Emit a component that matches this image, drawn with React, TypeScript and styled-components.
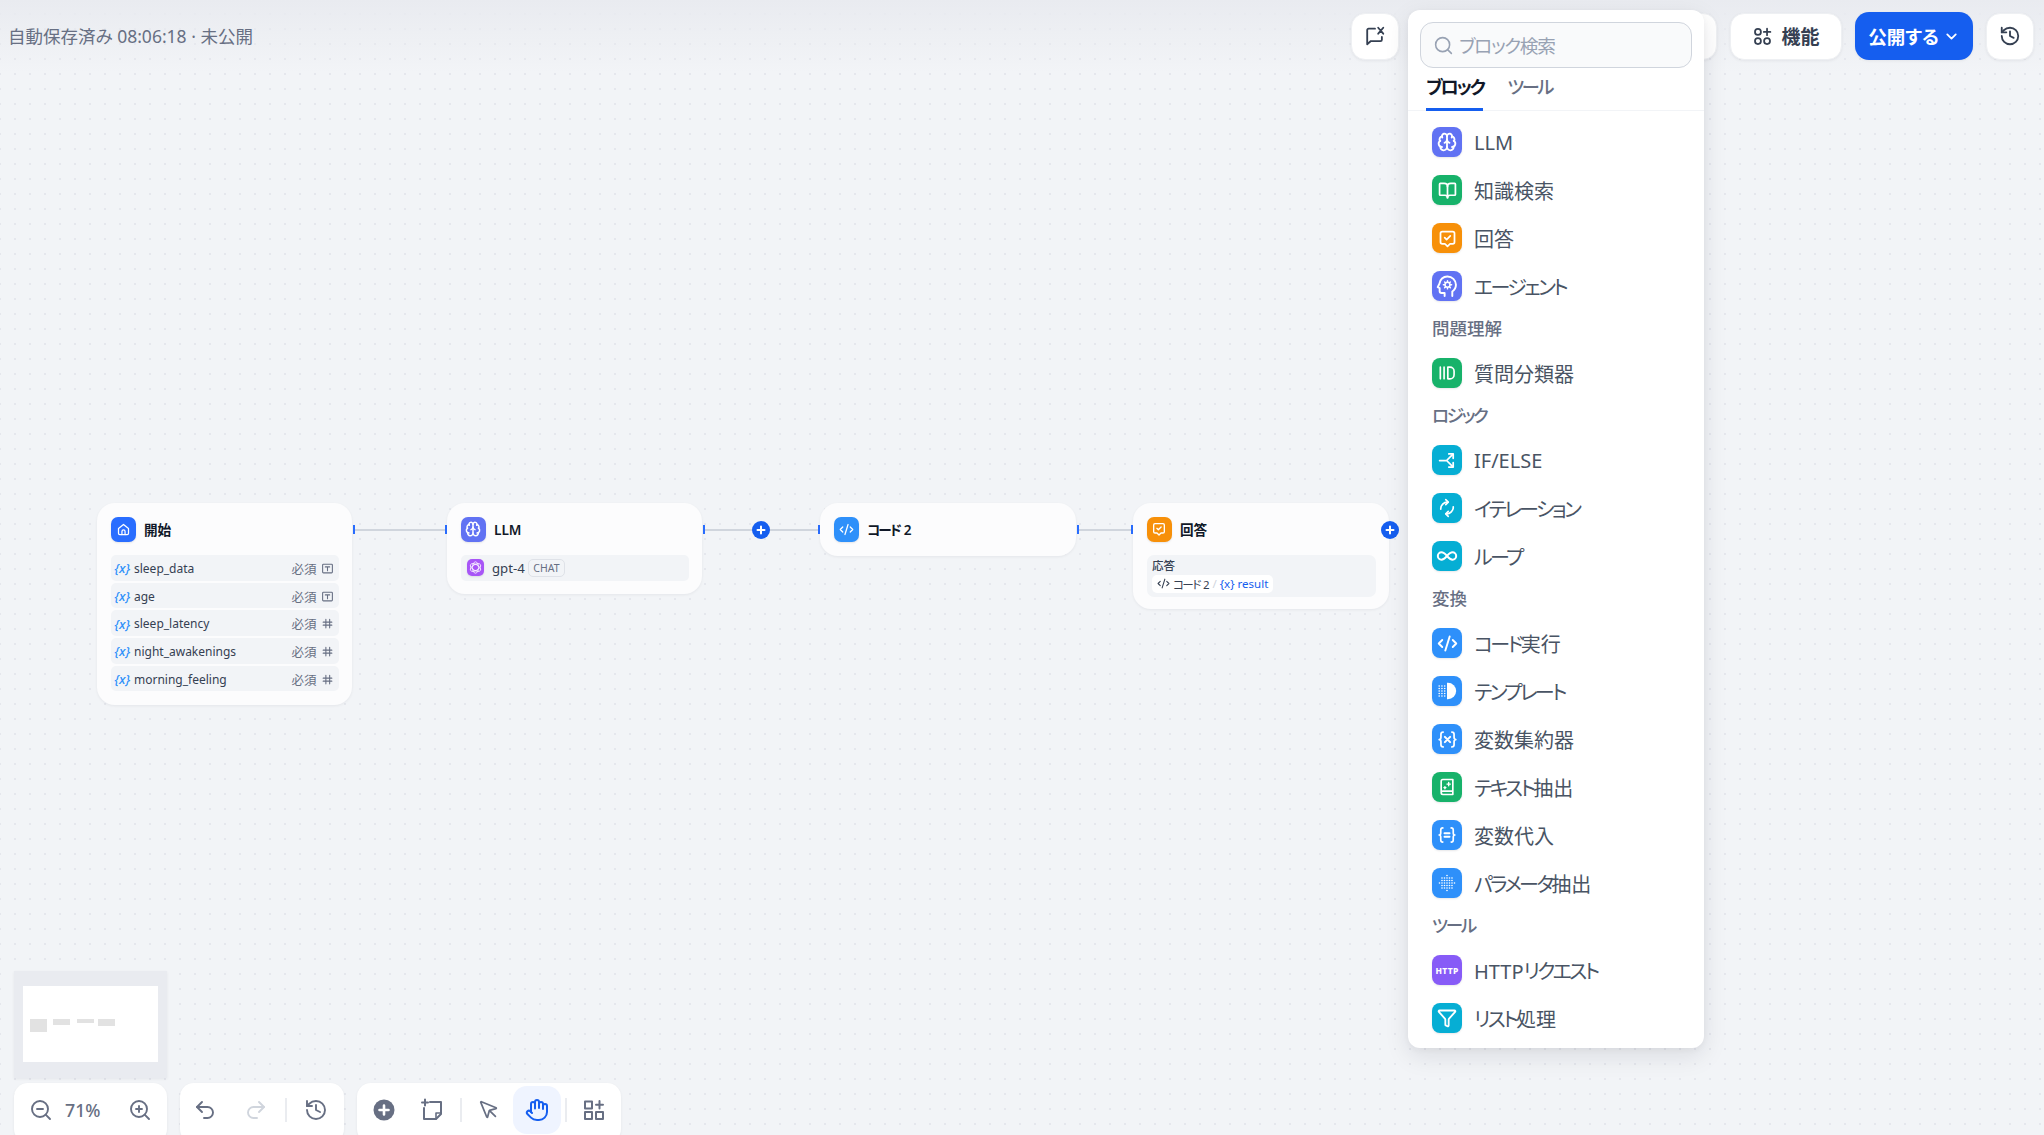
import React from "react";
import styled, { createGlobalStyle } from "styled-components";
import {
  BookOpen,
  Brain,
  ChevronDown,
  CodeXml,
  Funnel,
  Hand,
  History,
  Infinity as InfinityIcon,
  MousePointer,
  Redo2,
  Search,
  Undo2,
  ZoomIn,
  ZoomOut,
} from "lucide-react";

const BLUE = "#155eef";
const BLUE_LIGHT = "#2e90fa";
const GREEN = "#17b26a";
const ORANGE = "#f79009";
const INDIGO = "#6172f3";
const CYAN = "#06aed4";
const VIOLET = "#875bf7";

const GlobalStyle = createGlobalStyle`
  html, body {
    margin: 0;
    padding: 0;
    height: 100%;
    overflow: hidden;
  }
  body {
    font-family: "Noto Sans", "Noto Sans CJK JP", sans-serif;
    font-feature-settings: "palt";
    color: #354052;
  }
  * {
    box-sizing: border-box;
  }
`;

/* the reference font has narrow kana, so katakana runs get tightened */
const Kana = styled.span`
  letter-spacing: -0.13em;
`;

const Jp = ({ text }: { text: string }) => (
  <span>
    {text.split(/([\u30A0-\u30FF]+)/).map((part, i) => (i % 2 ? <Kana key={i}>{part}</Kana> : part))}
  </span>
);

/* ---------- drawn icons ---------- */

type IconProps = { size?: number };

const Svg = ({ size = 18, children }: IconProps & { children: React.ReactNode }) => (
  <svg
    width={size}
    height={size}
    viewBox="0 0 24 24"
    fill="none"
    stroke="currentColor"
    strokeWidth="2"
    strokeLinecap="round"
    strokeLinejoin="round"
  >
    {children}
  </svg>
);

const AnswerIcon = ({ size }: IconProps) => (
  <Svg size={size}>
    <path d="M6 4h12a2 2 0 0 1 2 2v10a2 2 0 0 1-2 2h-3l-3 3-3-3H6a2 2 0 0 1-2-2V6a2 2 0 0 1 2-2z" />
    <path d="M8.8 11l2.2 2.2 4.2-4.2" />
  </Svg>
);

const AgentIcon = ({ size }: IconProps) => (
  <Svg size={size}>
    <path d="M17 22v-4.800c2.300-1.500 3.800-4 3.800-6.900A8.800 8.800 0 0 0 11.800 1.500 8.300 8.300 0 0 0 3.600 9l-1.800 3.800 2 1v3a2 2 0 0 0 2 2H9V22" />
    <circle cx="12" cy="10.200" r="2.600" strokeWidth="1.500" />
    <path
      d="M12 5.900v1.500M12 13v1.500M7.700 10.200h1.500M14.800 10.200h1.500M9 7.200l1 1M14 12.200l1 1M15 7.200l-1 1M10 12.200l-1 1"
      strokeWidth="1.500"
    />
  </Svg>
);

const ClassifierIcon = ({ size }: IconProps) => (
  <Svg size={size}>
    <path d="M4 5v14M8.500 5v14" />
    <path d="M13 5h2.500a5 5 0 0 1 5 5v4a5 5 0 0 1-5 5H13z" />
  </Svg>
);

const BranchIcon = ({ size }: IconProps) => (
  <Svg size={size}>
    <path d="M3 12h8l7-7M11 12l7 7" />
    <path d="M13.500 4.500h5v5M13.500 19.500h5v-5" />
  </Svg>
);

const IterationIcon = ({ size }: IconProps) => (
  <Svg size={size}>
    <path d="M4.500 13.500a8 8 0 0 1 8.500-8.500" />
    <path d="M10.500 2 13.500 5l-3 3" />
    <path d="M19.500 10.500a8 8 0 0 1-8.500 8.500" />
    <path d="M13.500 16l-3 3 3 3" />
  </Svg>
);

const TemplateIcon = ({ size }: IconProps) => (
  <Svg size={size}>
    <path d="M12 3h1a9 9 0 0 1 0 18h-1z" fill="currentColor" stroke="none" />
    {[3.500, 6.500, 9.500].flatMap((x) =>
      [6.500, 9.250, 12, 14.750, 17.500].map((y) => (
        <circle key={`${x}-${y}`} cx={x} cy={y} r="0.900" fill="currentColor" stroke="none" />
      ))
    )}
  </Svg>
);

const BraceXIcon = ({ size }: IconProps) => (
  <Svg size={size}>
    <path d="M7 3.500C5 3.500 4.500 4.500 4.500 6v3.500c0 1.200-.8 2.500-2 2.500 1.200 0 2 1.300 2 2.500V18c0 1.500.5 2.500 2.500 2.500" />
    <path d="M17 3.500c2 0 2.500 1 2.500 2.500v3.500c0 1.200.8 2.500 2 2.500-1.200 0-2 1.300-2 2.500V18c0 1.500-.5 2.500-2.500 2.500" />
    <path d="M9 9l6 6M15 9l-6 6" strokeWidth="2.400" />
  </Svg>
);

const BraceEqualIcon = ({ size }: IconProps) => (
  <Svg size={size}>
    <path d="M7 3.500C5 3.500 4.500 4.500 4.500 6v3.500c0 1.200-.8 2.500-2 2.500 1.200 0 2 1.300 2 2.500V18c0 1.500.5 2.500 2.500 2.500" />
    <path d="M17 3.500c2 0 2.500 1 2.500 2.500v3.500c0 1.200.8 2.500 2 2.500-1.200 0-2 1.300-2 2.500V18c0 1.500-.5 2.500-2.500 2.500" />
    <path d="M9 9.800h6M9 14.200h6" strokeWidth="2.400" />
  </Svg>
);

const ExtractBookIcon = ({ size }: IconProps) => (
  <Svg size={size}>
    <path d="M5 18V5a2 2 0 0 1 2-2h12v18H7a2 2 0 0 1-2-2 2 2 0 0 1 2-2h12" />
    <path d="M14 6.500v4M12 8.500h4M9.500 11.500v2.500M8.300 12.700h2.400" strokeWidth="1.700" />
  </Svg>
);

const ParamIcon = ({ size }: IconProps) => {
  const cells = [3, 6, 9, 12, 15, 18, 21];
  return (
    <Svg size={size}>
      {cells.flatMap((x) =>
        cells
          .filter((y) => (x - 12) ** 2 + (y - 12) ** 2 < 90)
          .map((y) => <circle key={`${x}-${y}`} cx={x} cy={y} r="1" fill="currentColor" stroke="none" />)
      )}
    </Svg>
  );
};

const HomeIcon = ({ size }: IconProps) => (
  <Svg size={size}>
    <path d="M4 10.500 12 4l8 6.500V18a2 2 0 0 1-2 2H6a2 2 0 0 1-2-2z" />
    <path d="M9.500 20v-5a2.500 2.500 0 0 1 5 0v5" />
  </Svg>
);

const FeedbackIcon = ({ size }: IconProps) => (
  <Svg size={size}>
    <path d="M12 4H5a1.500 1.500 0 0 0-1.500 1.500V21l4-3.500H18a1.500 1.500 0 0 0 1.500-1.500v-3" />
    <path d="M15.500 3l5.500 6.500M21 3l-5.500 6.500" />
  </Svg>
);

const FeaturesIcon = ({ size }: IconProps) => (
  <Svg size={size}>
    <circle cx="6.800" cy="6.800" r="3.400" />
    <circle cx="6.800" cy="17.200" r="3.400" />
    <circle cx="17.200" cy="17.200" r="3.400" />
    <path d="M17.200 3v7.500M13.500 6.800H21" />
  </Svg>
);

const AddCircleIcon = ({ size }: IconProps) => (
  <Svg size={size}>
    <circle cx="12" cy="12" r="10.500" fill="currentColor" stroke="none" />
    <path d="M12 7.500v9M7.500 12h9" stroke="#fff" strokeWidth="2.600" />
  </Svg>
);

const NoteIcon = ({ size }: IconProps) => (
  <Svg size={size}>
    <path d="M10 4h11v12l-5 5H4V10" />
    <path d="M21 15h-5v6" strokeWidth="1.600" />
    <path d="M5 1.500v6M2 4.500h6" />
  </Svg>
);

const AppsIcon = ({ size }: IconProps) => (
  <Svg size={size}>
    <rect x="3" y="3.500" width="7" height="7" />
    <rect x="3" y="14" width="7" height="7" />
    <rect x="14" y="14" width="7" height="7" />
    <path d="M17.500 3v7.500M14 6.800h7" />
  </Svg>
);

const TextTypeIcon = ({ size }: IconProps) => (
  <Svg size={size}>
    <rect x="3" y="4" width="18" height="16" rx="1.500" />
    <path d="M8 9h8M12 9v7" />
  </Svg>
);

const HashIcon = ({ size }: IconProps) => (
  <Svg size={size}>
    <path d="M9 4v16M16 4v16M4 9.500h16M4 15h16" />
  </Svg>
);

const OpenAiMark = ({ size }: IconProps) => (
  <svg width={size} height={size} viewBox="0 0 24 24" fill="none" stroke="currentColor" strokeWidth="1.500">
    <ellipse cx="12" cy="12" rx="5.500" ry="10.500" />
    <ellipse cx="12" cy="12" rx="5.500" ry="10.500" transform="rotate(60 12 12)" />
    <ellipse cx="12" cy="12" rx="5.500" ry="10.500" transform="rotate(120 12 12)" />
  </svg>
);

/* ---------- page shell ---------- */

const Canvas = styled.div`
  position: relative;
  width: 100%;
  height: 100vh;
  overflow: hidden;
  background-color: #f2f4f7;
  background-image: radial-gradient(circle at 1px 1px, #e5e7ed 1px, transparent 1.2px);
  background-size: 15px 15px;
  background-position: -1px 13px;
`;

const TopFade = styled.div`
  position: absolute;
  inset: 0 0 auto 0;
  height: 72px;
  background: linear-gradient(180deg, #e9ebf0 0%, rgba(233, 235, 240, 0) 100%);
`;

const Header = styled.header`
  position: relative;
  display: flex;
  align-items: center;
  justify-content: space-between;
  padding: 12px 10px 0 8px;
`;

const SaveStatus = styled.div`
  margin-top: -2px;
  font-size: 17.500px;
  color: #676f83;
`;

const HeaderActions = styled.div`
  display: flex;
  align-items: center;
  gap: 13px;
`;

const HeaderButton = styled.button<{ $width: number }>`
  display: flex;
  align-items: center;
  justify-content: center;
  gap: 8px;
  width: ${({ $width }) => $width}px;
  height: 47px;
  border: 1px solid #eef0f3;
  border-radius: 14px;
  background: #fff;
  color: #354052;
  font: inherit;
  font-size: 19px;
  font-weight: 600;
  box-shadow: 0 1px 3px rgba(16, 24, 40, 0.06);
`;

const PublishButton = styled(HeaderButton)`
  gap: 4px;
  height: 48px;
  border: 0;
  background: ${BLUE};
  color: #fff;
  font-size: 18.500px;
  font-weight: 700;
`;

/* ---------- flow nodes ---------- */

const Node = styled.div<{ $x: number; $y: number; $w: number; $h: number }>`
  position: absolute;
  left: ${({ $x }) => $x}px;
  top: ${({ $y }) => $y}px;
  width: ${({ $w }) => $w}px;
  height: ${({ $h }) => $h}px;
  padding: 13px 13.500px;
  border-radius: 18px;
  background: #fcfcfd;
  box-shadow: 0 1px 3px rgba(16, 24, 40, 0.06);
`;

const NodeHead = styled.div`
  display: flex;
  align-items: center;
  gap: 8.500px;
  height: 26px;
  margin-bottom: 13px;
  font-size: 13.600px;
  font-weight: 600;
  color: #101828;
`;

const Tile = styled.span<{ $bg: string; $size: number }>`
  display: inline-flex;
  flex: none;
  align-items: center;
  justify-content: center;
  width: ${({ $size }) => $size}px;
  height: ${({ $size }) => $size}px;
  border-radius: ${({ $size }) => Math.round($size * 0.27)}px;
  background: ${({ $bg }) => $bg};
  color: #fff;
  box-shadow: 0 1px 2px rgba(16, 24, 40, 0.1);
`;

const VarList = styled.div`
  display: flex;
  flex-direction: column;
  gap: 2px;
`;

const VarRow = styled.div`
  display: flex;
  align-items: center;
  height: 25.700px;
  padding: 1px 5px 0 4px;
  border-radius: 5px;
  background: #f2f4f7;
  font-size: 12px;
  color: #354052;
`;

const VarMark = styled.span`
  width: 19.500px;
  color: ${BLUE_LIGHT};
  font-style: italic;
  font-size: 13px;
  font-weight: 500;
`;

const VarName = styled.span`
  flex: 1;
`;

const Required = styled.span`
  margin-right: 4px;
  color: #676f83;
  font-size: 12.500px;
`;

const TypeGlyph = styled.span`
  display: inline-flex;
  color: #676f83;
`;

const ModelRow = styled(VarRow)`
  padding: 0 6.500px;
  gap: 8px;
  font-size: 13.200px;
`;

const ChatBadge = styled.span`
  display: inline-flex;
  align-items: center;
  height: 18px;
  margin-left: -5px;
  padding: 0 4.500px;
  border: 1px solid #dfe2e8;
  border-radius: 5px;
  font-size: 10.500px;
  color: #676f83;
`;

const AnswerBody = styled.div`
  height: 42px;
  padding: 3px 5.500px;
  border-radius: 7px;
  background: #f2f4f7;
`;

const AnswerLabel = styled.div`
  height: 15px;
  font-size: 11.500px;
  line-height: 15px;
  font-weight: 500;
  color: #354052;
`;

const VarChip = styled.div`
  display: inline-flex;
  align-items: center;
  gap: 3px;
  height: 18px;
  padding: 0 5px;
  border-radius: 5px;
  background: #fff;
  font-size: 11.500px;
  color: #354052;
`;

const ChipDivider = styled.span`
  color: #d0d5dd;
`;

const ChipVar = styled.span`
  color: ${BLUE};
`;

/* ---------- wires ---------- */

const Wire = styled.div<{ $x: number; $w: number }>`
  position: absolute;
  left: ${({ $x }) => $x}px;
  top: 528.500px;
  width: ${({ $w }) => $w}px;
  height: 2px;
  background: #d0d5dd;
`;

const Handle = styled.div<{ $x: number }>`
  position: absolute;
  left: ${({ $x }) => $x}px;
  top: 525px;
  width: 2px;
  height: 9px;
  background: #296dff;
`;

const AddDot = styled.div<{ $x: number }>`
  position: absolute;
  left: ${({ $x }) => $x}px;
  top: 520.500px;
  display: flex;
  align-items: center;
  justify-content: center;
  width: 18px;
  height: 18px;
  border-radius: 50%;
  background: ${BLUE};
  color: #fff;
`;

/* ---------- block picker ---------- */

const BlockPanel = styled.aside`
  position: absolute;
  left: 1408px;
  top: 10px;
  width: 296px;
  height: 1038px;
  border-radius: 12px;
  background: #fff;
  box-shadow: 0 8px 24px rgba(16, 24, 40, 0.1), 0 2px 6px rgba(16, 24, 40, 0.04);
`;

const SearchBox = styled.label`
  display: flex;
  align-items: center;
  gap: 5px;
  height: 46px;
  margin: 12px 12px 0;
  padding: 0 12px;
  border: 1.500px solid #d0d5dd;
  border-radius: 13px;
  background: #f9fafb;
  color: #98a2b3;
`;

const SearchInput = styled.input`
  flex: 1;
  min-width: 0;
  border: 0;
  outline: 0;
  padding: 0;
  background: transparent;
  font: inherit;
  font-size: 18.700px;
  letter-spacing: -1.300px;
  &::placeholder {
    color: #98a2b3;
  }
`;

const Tabs = styled.div`
  display: flex;
  gap: 24px;
  height: 43px;
  padding-left: 18px;
  border-bottom: 1px solid #f2f4f7;
`;

const Tab = styled.div<{ $active?: boolean }>`
  height: 43px;
  padding-top: 4px;
  border-bottom: 3px solid ${({ $active }) => ($active ? BLUE : "transparent")};
  font-size: 18.200px;
  line-height: 30px;
  font-weight: ${({ $active }) => ($active ? 700 : 500)};
  color: ${({ $active }) => ($active ? "#101828" : "#676f83")};
`;

const BlockList = styled.div`
  padding-top: 7px;
`;

const SectionLabel = styled.div`
  height: 39px;
  padding-left: 24px;
  font-size: 17.500px;
  line-height: 36px;
  font-weight: 500;
  color: #676f83;
`;

const BlockRow = styled.div`
  display: flex;
  align-items: center;
  gap: 12px;
  height: 48px;
  padding-left: 24px;
  font-size: 20px;
  color: #495464;
`;

const BlockName = styled.span`
  margin-top: 1px;
`;

const HttpMark = styled.span`
  font-size: 8.500px;
  font-weight: 800;
  letter-spacing: 0.3px;
`;

/* ---------- bottom left ---------- */

const MiniMap = styled.div`
  position: absolute;
  left: 14px;
  top: 971px;
  width: 153px;
  height: 107px;
  background: #e9ebf0;
  box-shadow: 0 1px 3px rgba(16, 24, 40, 0.06);
`;

const Dock = styled.div`
  position: absolute;
  left: 14px;
  top: 1083px;
  display: flex;
  gap: 13px;
`;

const DockGroup = styled.div`
  display: flex;
  align-items: center;
  height: 60px;
  padding: 3px 3px 9px;
  border-radius: 14px;
  background: #fff;
  box-shadow: 0 1px 3px rgba(16, 24, 40, 0.06);
`;

const HistoryGroup = styled(DockGroup)`
  gap: 3px;
  padding-left: 1px;
  padding-right: 4px;
`;

const DockButton = styled.div<{ $active?: boolean; $muted?: boolean }>`
  display: flex;
  align-items: center;
  justify-content: center;
  width: 48px;
  height: 48px;
  border-radius: 14px;
  background: ${({ $active }) => ($active ? "#eff4ff" : "transparent")};
  color: ${({ $active, $muted }) => ($active ? BLUE : $muted ? "#d0d5dd" : "#676f83")};
`;

const ZoomValue = styled.div`
  width: 51px;
  font-size: 17.800px;
  font-weight: 500;
  color: #676f83;
`;

const DockDivider = styled.div`
  flex: none;
  width: 2px;
  height: 24px;
  margin: 0 3.500px;
  background: #eaecf0;
`;

const HistoryDivider = styled(DockDivider)`
  margin: 0 2px;
`;

/* ---------- data ---------- */

type Block = { label: string; color: string; icon: React.ReactNode };
type Section = { title?: string; blocks: Block[] };

const sections: Section[] = [
  {
    blocks: [
      { label: "LLM", color: INDIGO, icon: <Brain size={20} strokeWidth={2.2} /> },
      { label: "知識検索", color: GREEN, icon: <BookOpen size={19} strokeWidth={2.2} /> },
      { label: "回答", color: ORANGE, icon: <AnswerIcon size={21} /> },
      { label: "エージェント", color: INDIGO, icon: <AgentIcon size={23} /> },
    ],
  },
  { title: "問題理解", blocks: [{ label: "質問分類器", color: GREEN, icon: <ClassifierIcon size={20} /> }] },
  {
    title: "ロジック",
    blocks: [
      { label: "IF/ELSE", color: CYAN, icon: <BranchIcon size={21} /> },
      { label: "イテレーション", color: CYAN, icon: <IterationIcon size={20} /> },
      { label: "ループ", color: CYAN, icon: <InfinityIcon size={22} strokeWidth={2.2} /> },
    ],
  },
  {
    title: "変換",
    blocks: [
      { label: "コード実行", color: BLUE_LIGHT, icon: <CodeXml size={21} strokeWidth={2.2} /> },
      { label: "テンプレート", color: BLUE_LIGHT, icon: <TemplateIcon size={22} /> },
      { label: "変数集約器", color: BLUE_LIGHT, icon: <BraceXIcon size={21} /> },
      { label: "テキスト抽出", color: GREEN, icon: <ExtractBookIcon size={20} /> },
      { label: "変数代入", color: BLUE_LIGHT, icon: <BraceEqualIcon size={20} /> },
      { label: "パラメータ抽出", color: BLUE_LIGHT, icon: <ParamIcon size={20} /> },
    ],
  },
  {
    title: "ツール",
    blocks: [
      { label: "HTTPリクエスト", color: VIOLET, icon: <HttpMark>HTTP</HttpMark> },
      { label: "リスト処理", color: CYAN, icon: <Funnel size={20} strokeWidth={2.2} /> },
    ],
  },
];

const startVars = [
  { name: "sleep_data", type: "text" },
  { name: "age", type: "text" },
  { name: "sleep_latency", type: "number" },
  { name: "night_awakenings", type: "number" },
  { name: "morning_feeling", type: "number" },
];

const PlusGlyph = () => (
  <svg width="10" height="10" viewBox="0 0 10 10" stroke="currentColor" strokeWidth="2" strokeLinecap="round">
    <path d="M5 1.500v7M1.500 5h7" />
  </svg>
);

export default function App() {
  return (
    <Canvas>
      <GlobalStyle />
      <TopFade />

      <Header>
        <SaveStatus>自動保存済み 08:06:18 · 未公開</SaveStatus>
        <HeaderActions>
          <HeaderButton $width={48}>
            <FeedbackIcon size={22} />
          </HeaderButton>
          <HeaderButton $width={305} aria-hidden />
          <HeaderButton $width={112}>
            <FeaturesIcon size={21} />
            機能
          </HeaderButton>
          <PublishButton $width={118}>
            公開する
            <ChevronDown size={17} strokeWidth={2.5} />
          </PublishButton>
          <HeaderButton $width={48}>
            <History size={22} />
          </HeaderButton>
        </HeaderActions>
      </Header>

      <Wire $x={354} $w={92} />
      <Wire $x={704} $w={115} />
      <Wire $x={1077} $w={55} />
      <Handle $x={353} />
      <Handle $x={445} />
      <Handle $x={703} />
      <Handle $x={818} />
      <Handle $x={1077} />
      <Handle $x={1131} />
      <AddDot $x={752}>
        <PlusGlyph />
      </AddDot>

      <Node $x={97} $y={503} $w={255} $h={202}>
        <NodeHead>
          <Tile $bg="#296dff" $size={25}>
            <HomeIcon size={15} />
          </Tile>
          開始
        </NodeHead>
        <VarList>
          {startVars.map((item) => (
            <VarRow key={item.name}>
              <VarMark>{"{x}"}</VarMark>
              <VarName>{item.name}</VarName>
              <Required>必須</Required>
              <TypeGlyph>{item.type === "text" ? <TextTypeIcon size={13} /> : <HashIcon size={13} />}</TypeGlyph>
            </VarRow>
          ))}
        </VarList>
      </Node>

      <Node $x={447} $y={503} $w={255} $h={91}>
        <NodeHead>
          <Tile $bg={INDIGO} $size={25}>
            <Brain size={16} strokeWidth={2.2} />
          </Tile>
          LLM
        </NodeHead>
        <ModelRow>
          <Tile $bg="#a855f7" $size={17}>
            <OpenAiMark size={13} />
          </Tile>
          gpt-4
          <ChatBadge>CHAT</ChatBadge>
        </ModelRow>
      </Node>

      <Node $x={820} $y={503} $w={256} $h={53}>
        <NodeHead>
          <Tile $bg={BLUE_LIGHT} $size={25}>
            <CodeXml size={15} />
          </Tile>
          <Jp text="コード 2" />
        </NodeHead>
      </Node>

      <Node $x={1133} $y={503} $w={256} $h={106}>
        <NodeHead>
          <Tile $bg={ORANGE} $size={25}>
            <AnswerIcon size={16} />
          </Tile>
          回答
        </NodeHead>
        <AnswerBody>
          <AnswerLabel>応答</AnswerLabel>
          <VarChip>
            <CodeXml size={13} />
            <Jp text="コード 2" />
            <ChipDivider>/</ChipDivider>
            <ChipVar>{"{x}"} result</ChipVar>
          </VarChip>
        </AnswerBody>
      </Node>

      <AddDot $x={1381}>
        <PlusGlyph />
      </AddDot>

      <BlockPanel>
        <SearchBox>
          <Search size={21} strokeWidth={1.8} />
          <SearchInput placeholder="ブロック検索" readOnly />
        </SearchBox>
        <Tabs>
          <Tab $active>
            <Jp text="ブロック" />
          </Tab>
          <Tab>
            <Jp text="ツール" />
          </Tab>
        </Tabs>
        <BlockList>
          {sections.map((section, index) => (
            <section key={index}>
              {section.title && (
                <SectionLabel>
                  <Jp text={section.title} />
                </SectionLabel>
              )}
              {section.blocks.map((block) => (
                <BlockRow key={block.label}>
                  <Tile $bg={block.color} $size={30}>
                    {block.icon}
                  </Tile>
                  <BlockName>
                    <Jp text={block.label} />
                  </BlockName>
                </BlockRow>
              ))}
            </section>
          ))}
        </BlockList>
      </BlockPanel>

      <MiniMap>
        <svg width="153" height="107" viewBox="0 0 153 107">
          <rect x="9" y="15" width="135" height="76" fill="#fff" />
          <rect x="16" y="48" width="17" height="13" fill="#e2e2e2" />
          <rect x="39" y="48" width="17" height="6" fill="#e2e2e2" />
          <rect x="63" y="48" width="17" height="4" fill="#e2e2e2" />
          <rect x="84" y="48" width="17" height="7" fill="#e2e2e2" />
        </svg>
      </MiniMap>

      <Dock>
        <DockGroup>
          <DockButton>
            <ZoomOut size={24} strokeWidth={1.9} />
          </DockButton>
          <ZoomValue>71%</ZoomValue>
          <DockButton>
            <ZoomIn size={24} strokeWidth={1.9} />
          </DockButton>
        </DockGroup>
        <HistoryGroup>
          <DockButton>
            <Undo2 size={24} strokeWidth={1.9} />
          </DockButton>
          <DockButton $muted>
            <Redo2 size={24} strokeWidth={1.9} />
          </DockButton>
          <HistoryDivider />
          <DockButton>
            <History size={24} strokeWidth={1.9} />
          </DockButton>
        </HistoryGroup>
        <DockGroup>
          <DockButton>
            <AddCircleIcon size={24} />
          </DockButton>
          <DockButton>
            <NoteIcon size={24} />
          </DockButton>
          <DockDivider />
          <DockButton>
            <MousePointer size={22} strokeWidth={1.9} />
          </DockButton>
          <DockButton $active>
            <Hand size={24} strokeWidth={2} />
          </DockButton>
          <DockDivider />
          <DockButton>
            <AppsIcon size={24} />
          </DockButton>
        </DockGroup>
      </Dock>
    </Canvas>
  );
}
